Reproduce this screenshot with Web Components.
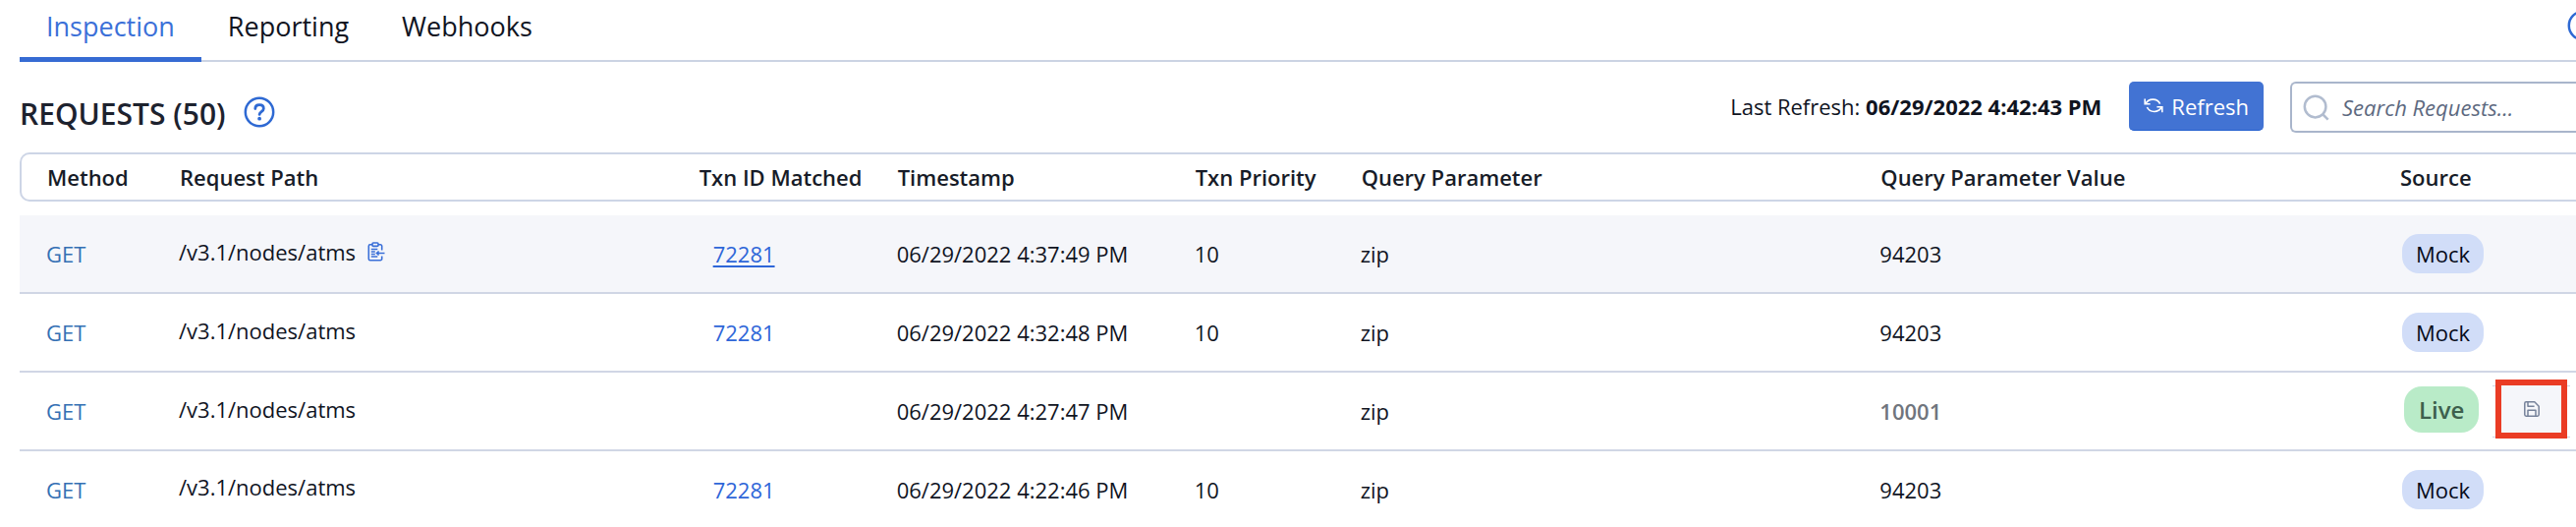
<!DOCTYPE html>
<html lang="en">
<head>
<meta charset="utf-8">
<title>Inspection</title>
<style>
  body { margin: 0; background: #fff; color: #10141f; font: 22px/30px "Open Sans", "Noto Sans", sans-serif; }
</style>
</head>
<body>
<app-page>
  <tab-bar slot="tabs">
    <tab-item active>Inspection</tab-item>
    <tab-item>Reporting</tab-item>
    <tab-item>Webhooks</tab-item>
  </tab-bar>
  <request-toolbar slot="toolbar" count="50" refreshed="06/29/2022 4:42:43 PM"></request-toolbar>
  <request-table></request-table>
</app-page>

<script>
const define = (name, html, setup) => {
  const template = document.createElement('template');
  template.innerHTML = html;
  customElements.define(name, class extends HTMLElement {
    constructor() {
      super();
      this.attachShadow({ mode: 'open' }).append(template.content.cloneNode(true));
    }
    connectedCallback() { if (setup) setup(this, this.shadowRoot); }
  });
};

define('app-page', `
  <style>
    :host { display: block; padding-left: 20px; overflow-x: clip; }
  </style>
  <slot name="tabs"></slot>
  <main><slot name="toolbar"></slot><slot></slot></main>`);

define('help-button', `
  <style>
    :host { display: block; }
    button { display: block; border: 0; padding: 0; background: none; color: #2e69d3; cursor: pointer; }
    svg { display: block; }
  </style>
  <button type="button" aria-label="Help">
    <svg width="32" height="32" viewBox="0 0 32 32" fill="none" stroke="currentColor" stroke-width="2.5" stroke-linecap="round">
      <circle cx="16" cy="16" r="14.2"/>
      <path d="M11.8 12.6c0-2.4 1.8-3.9 4.3-3.9s4.2 1.5 4.2 3.7c0 3.1-4.2 3.2-4.2 6" stroke-width="2.8"/>
      <circle cx="16.1" cy="22.7" r="1.9" fill="currentColor" stroke="none"/>
    </svg>
  </button>`);

define('tab-item', `
  <style>
    :host { display: block; margin-bottom: -2px; }
    a { display: block; box-sizing: border-box; height: 63px; padding: 9px 27px 0; font-size: 27px; line-height: 36px;
        color: inherit; text-decoration: none; }
    :host([active]) a { color: #3b70d8; border-bottom: 5px solid #366bd3; border-radius: 2px 2px 0 0; }
  </style>
  <a href="#"><slot></slot></a>`);

define('tab-bar', `
  <style>
    :host { display: block; }
    nav { display: flex; border-bottom: 2px solid #cbd3e3; }
    help-button { margin: 10px -23px 0 auto; }
  </style>
  <nav><slot></slot><help-button></help-button></nav>`);

define('request-toolbar', `
  <style>
    :host { display: flex; box-sizing: border-box; min-height: 92px; padding-top: 20px; align-items: flex-start; }
    h1 { margin: 13px 0 0; font-size: 30px; font-weight: 600; line-height: 40px; color: #1d222e; }
    help-button { margin: 15px 0 0 18px; }
    p { margin: 10px 28px 0 auto; }
    .refresh { display: flex; align-items: center; gap: 8px; height: 50px; margin-right: 27px; padding: 0 15px; border: 0;
      border-bottom: 1px solid #2560cf; border-radius: 5px; background: #4273d3; color: #fff; font: inherit; cursor: pointer; }
    .search { display: flex; align-items: center; box-sizing: border-box; flex: 0 0 291px; min-width: 0; height: 52px;
      padding-left: 11px; border: 2px solid #a9b5cb; border-right: 0; border-radius: 6px 0 0 6px; gap: 13px; }
    input { flex: 1; width: 0; min-width: 0; padding: 0; border: 0; outline: 0; background: none; font: inherit; font-style: italic; color: inherit; }
    input::placeholder { color: #5d6980; opacity: 1; }
    svg { display: block; flex: none; }
  </style>
  <h1>REQUESTS (<span></span>)</h1>
  <help-button></help-button>
  <p>Last Refresh: <strong></strong></p>
  <button type="button" class="refresh">
    <svg width="20" height="20" viewBox="0 0 20 20" fill="none" stroke="currentColor" stroke-width="1.6">
      <path d="M1.2 2.6v5.2h5.4M2 7.4A8 7.4 0 0 1 16.6 7.6M18.8 16.2V10.8h-5.4M18 11.2A8 7.4 0 0 1 3.4 11"/>
    </svg>
    Refresh
  </button>
  <label class="search">
    <svg width="27" height="27" viewBox="0 0 27 27" fill="none" stroke="#b1bccf" stroke-width="2.5" role="img" aria-label="Search">
      <circle cx="12.6" cy="12.6" r="10.8"/><path d="M20 20l5.6 5.6"/>
    </svg>
    <input type="text" placeholder="Search Requests..." aria-label="Search requests">
  </label>`,
  (host, root) => {
    root.querySelector('span').textContent = host.getAttribute('count');
    root.querySelector('strong').textContent = host.getAttribute('refreshed');
  });

define('source-badge', `
  <style>
    :host { display: inline-block; padding: 5px 14px; border-radius: 17px; background: #d1ddf8; color: #050a18; }
    :host([live]) { padding: 8px 15px; border-radius: 18px; background: #b9ebc8; color: #3d604d;
      font-size: 24px; font-weight: 600; line-height: 31px; }
  </style>
  <slot></slot>`);

define('save-action', `
  <style>
    :host { position: relative; display: block; }
    :host::before { content: ""; position: absolute; inset: 6px -3px 1px; border: solid #d0d6e4; border-width: 1px 0; }
    button { position: relative; display: grid; place-items: center; box-sizing: border-box; width: 73px; height: 60px;
      padding: 0; border: 6px solid #ea3c24; background: #f5f6fa; color: #76829a; cursor: pointer; }
    svg { display: block; }
  </style>
  <button type="button" aria-label="Save">
    <svg width="16" height="16" viewBox="0 0 16 16" fill="none" stroke="currentColor" stroke-width="1.5" stroke-linejoin="round">
      <path d="M2.2.8h8.6l4.4 4.4v8.6a1.4 1.4 0 0 1-1.4 1.4H2.2A1.4 1.4 0 0 1 .8 13.8V2.2A1.4 1.4 0 0 1 2.2.8z"/>
      <path d="M4 .8v4.4h6.6M4 15.2V9.2h8v6"/>
    </svg>
  </button>`);

define('copy-action', `
  <style>
    :host { display: block; }
    button { display: block; padding: 0; border: 0; background: none; color: #3a6fd8; cursor: pointer; }
    svg { display: block; }
  </style>
  <button type="button" aria-label="Copy path">
    <svg width="18" height="20" viewBox="0 0 18 20" fill="none" stroke="currentColor" stroke-width="1.6">
      <path d="M5 2.8H2.8A1.5 1.5 0 0 0 1.3 4.3V17.2A1.5 1.5 0 0 0 2.8 18.7H13.2A1.5 1.5 0 0 0 14.7 17.2V14.5M11 2.8h2.2a1.5 1.5 0 0 1 1.5 1.5V8.5"/>
      <rect x="5" y="1" width="6" height="3.4" rx="1"/>
      <path d="M3.8 7.5h6.5M3.8 10h4M3.8 12.5h4M3.8 15h6.5" stroke-width="1.4"/>
      <path d="M17.5 11.5H9.6M11.6 9.5l-2.2 2 2.2 2"/>
    </svg>
  </button>`);

const requests = [
  { id: '72281', time: '06/29/2022 4:37:49 PM', priority: '10', value: '94203', source: 'Mock', hover: true },
  { id: '72281', time: '06/29/2022 4:32:48 PM', priority: '10', value: '94203', source: 'Mock' },
  { id: '', time: '06/29/2022 4:27:47 PM', priority: '', value: '10001', source: 'Live' },
  { id: '72281', time: '06/29/2022 4:22:46 PM', priority: '10', value: '94203', source: 'Mock' },
];

const row = r => {
  const live = r.source === 'Live';
  return `<tr class="${r.hover ? 'hover' : ''}">
    <td class="method">GET</td>
    <td class="path"><div class="line">/v3.1/nodes/atms${r.hover ? '<copy-action></copy-action>' : ''}</div></td>
    <td class="txn">${r.id ? `<a href="#">${r.id}</a>` : ''}</td>
    <td>${r.time}</td><td>${r.priority}</td><td>zip</td>
    <td class="${live ? 'muted' : ''}">${r.value}</td>
    <td class="source ${live ? 'live' : ''}"><div class="line"><source-badge${live ? ' live' : ''}>${r.source}</source-badge>${live ? '<save-action></save-action>' : ''}</div></td>
  </tr>`;
};

define('request-table', `
  <style>
    :host { display: block; }
    table { width: 100%; table-layout: fixed; border-spacing: 0; }
    .c-method { width: 162px; } .c-txn { width: 202px; } .c-time { width: 303px; }
    .c-priority { width: 169px; } .c-source { width: 180px; }
    th, td { box-sizing: border-box; padding: 0; text-align: left; white-space: nowrap; }
    th { height: 50px; padding-left: 1px; border: solid #cdd5e6; border-width: 2px 0; font-weight: 600; color: #171c28; }
    th:first-child { border-left-width: 2px; border-radius: 10px 0 0 10px; padding-left: 26px; }
    tbody::before { content: ""; display: block; height: 14px; }
    td { height: 80px; border-bottom: 2px solid #d0d6e5; }
    tr:last-child td { height: 77px; border-bottom: 0; }
    .hover td { background: #f5f6fa; }
    .method { padding-left: 27px; color: #3470b4; }
    .path { padding-bottom: 5px; }
    .line { display: flex; align-items: center; gap: 12px; }
    .txn { padding-left: 15px; }
    a { color: #2e66d8; text-decoration: none; }
    .hover a { text-decoration: underline; text-decoration-thickness: 2px; text-underline-offset: 3px; }
    .muted { color: #70757d; font-weight: 600; }
    .source { padding-left: 3px; }
    .live { padding: 0 0 4px 5px; }
    .live .line { gap: 17px; }
  </style>
  <table>
    <colgroup><col class="c-method"><col><col class="c-txn"><col class="c-time"><col class="c-priority"><col><col><col class="c-source"></colgroup>
    <thead><tr>
      <th>Method</th><th>Request Path</th><th>Txn ID Matched</th><th>Timestamp</th><th>Txn Priority</th>
      <th>Query Parameter</th><th>Query Parameter Value</th><th>Source</th>
    </tr></thead>
    <tbody>${requests.map(row).join('')}</tbody>
  </table>`);
</script>
</body>
</html>
